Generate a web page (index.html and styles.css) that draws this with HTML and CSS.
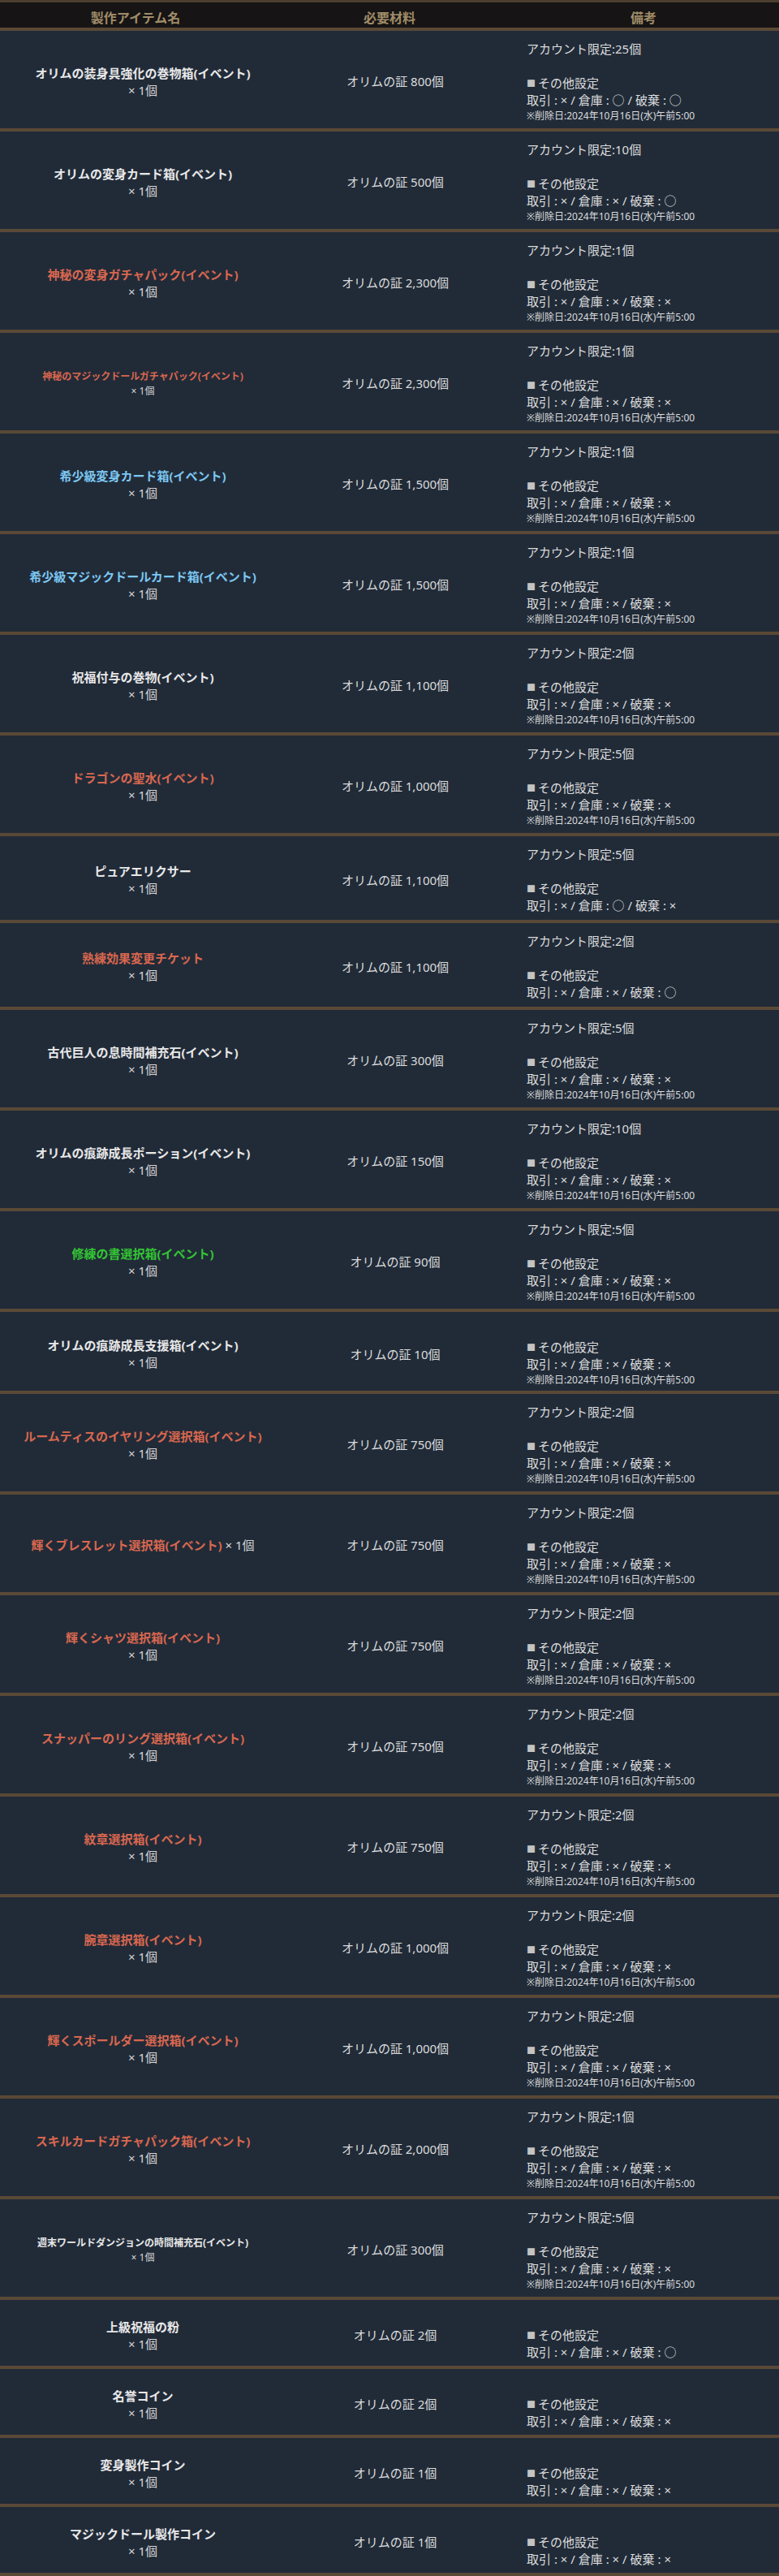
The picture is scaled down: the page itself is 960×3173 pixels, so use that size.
FILE: index.html
```html
<!DOCTYPE html>
<html lang="ja">
<head>
<meta charset="utf-8">
<title>製作アイテム一覧</title>
<link rel="stylesheet" href="styles.css">
</head>
<body>
<div class="table">
  <div class="thead">
    <div class="th">製作アイテム名</div>
    <div class="th">必要材料</div>
    <div class="th">備考</div>
  </div>

  <div class="row">
    <div class="item"><div class="name">オリムの装身具強化の巻物箱(イベント)</div><div class="qty">× 1個</div></div>
    <div class="mat">オリムの証 800個</div>
    <div class="note"><div>アカウント限定:25個</div><div></div><div><span class="sq">■</span>その他設定</div><div>取引 : × / 倉庫 : ○ / 破棄 : ○</div><div class="del">※削除日:2024年10月16日(水)午前5:00</div></div>
  </div>

  <div class="row">
    <div class="item"><div class="name">オリムの変身カード箱(イベント)</div><div class="qty">× 1個</div></div>
    <div class="mat">オリムの証 500個</div>
    <div class="note"><div>アカウント限定:10個</div><div></div><div><span class="sq">■</span>その他設定</div><div>取引 : × / 倉庫 : × / 破棄 : ○</div><div class="del">※削除日:2024年10月16日(水)午前5:00</div></div>
  </div>

  <div class="row">
    <div class="item"><div class="name red">神秘の変身ガチャパック(イベント)</div><div class="qty">× 1個</div></div>
    <div class="mat">オリムの証 2,300個</div>
    <div class="note"><div>アカウント限定:1個</div><div></div><div><span class="sq">■</span>その他設定</div><div>取引 : × / 倉庫 : × / 破棄 : ×</div><div class="del">※削除日:2024年10月16日(水)午前5:00</div></div>
  </div>

  <div class="row">
    <div class="item small"><div class="name red">神秘のマジックドールガチャパック(イベント)</div><div class="qty">× 1個</div></div>
    <div class="mat">オリムの証 2,300個</div>
    <div class="note"><div>アカウント限定:1個</div><div></div><div><span class="sq">■</span>その他設定</div><div>取引 : × / 倉庫 : × / 破棄 : ×</div><div class="del">※削除日:2024年10月16日(水)午前5:00</div></div>
  </div>

  <div class="row">
    <div class="item"><div class="name blue">希少級変身カード箱(イベント)</div><div class="qty">× 1個</div></div>
    <div class="mat">オリムの証 1,500個</div>
    <div class="note"><div>アカウント限定:1個</div><div></div><div><span class="sq">■</span>その他設定</div><div>取引 : × / 倉庫 : × / 破棄 : ×</div><div class="del">※削除日:2024年10月16日(水)午前5:00</div></div>
  </div>

  <div class="row">
    <div class="item"><div class="name blue">希少級マジックドールカード箱(イベント)</div><div class="qty">× 1個</div></div>
    <div class="mat">オリムの証 1,500個</div>
    <div class="note"><div>アカウント限定:1個</div><div></div><div><span class="sq">■</span>その他設定</div><div>取引 : × / 倉庫 : × / 破棄 : ×</div><div class="del">※削除日:2024年10月16日(水)午前5:00</div></div>
  </div>

  <div class="row">
    <div class="item"><div class="name">祝福付与の巻物(イベント)</div><div class="qty">× 1個</div></div>
    <div class="mat">オリムの証 1,100個</div>
    <div class="note"><div>アカウント限定:2個</div><div></div><div><span class="sq">■</span>その他設定</div><div>取引 : × / 倉庫 : × / 破棄 : ×</div><div class="del">※削除日:2024年10月16日(水)午前5:00</div></div>
  </div>

  <div class="row">
    <div class="item"><div class="name red">ドラゴンの聖水(イベント)</div><div class="qty">× 1個</div></div>
    <div class="mat">オリムの証 1,000個</div>
    <div class="note"><div>アカウント限定:5個</div><div></div><div><span class="sq">■</span>その他設定</div><div>取引 : × / 倉庫 : × / 破棄 : ×</div><div class="del">※削除日:2024年10月16日(水)午前5:00</div></div>
  </div>

  <div class="row">
    <div class="item"><div class="name">ピュアエリクサー</div><div class="qty">× 1個</div></div>
    <div class="mat">オリムの証 1,100個</div>
    <div class="note"><div>アカウント限定:5個</div><div></div><div><span class="sq">■</span>その他設定</div><div>取引 : × / 倉庫 : ○ / 破棄 : ×</div></div>
  </div>

  <div class="row">
    <div class="item"><div class="name red">熟練効果変更チケット</div><div class="qty">× 1個</div></div>
    <div class="mat">オリムの証 1,100個</div>
    <div class="note"><div>アカウント限定:2個</div><div></div><div><span class="sq">■</span>その他設定</div><div>取引 : × / 倉庫 : × / 破棄 : ○</div></div>
  </div>

  <div class="row">
    <div class="item"><div class="name">古代巨人の息時間補充石(イベント)</div><div class="qty">× 1個</div></div>
    <div class="mat">オリムの証 300個</div>
    <div class="note"><div>アカウント限定:5個</div><div></div><div><span class="sq">■</span>その他設定</div><div>取引 : × / 倉庫 : × / 破棄 : ×</div><div class="del">※削除日:2024年10月16日(水)午前5:00</div></div>
  </div>

  <div class="row">
    <div class="item"><div class="name">オリムの痕跡成長ポーション(イベント)</div><div class="qty">× 1個</div></div>
    <div class="mat">オリムの証 150個</div>
    <div class="note"><div>アカウント限定:10個</div><div></div><div><span class="sq">■</span>その他設定</div><div>取引 : × / 倉庫 : × / 破棄 : ×</div><div class="del">※削除日:2024年10月16日(水)午前5:00</div></div>
  </div>

  <div class="row">
    <div class="item"><div class="name green">修練の書選択箱(イベント)</div><div class="qty">× 1個</div></div>
    <div class="mat">オリムの証 90個</div>
    <div class="note"><div>アカウント限定:5個</div><div></div><div><span class="sq">■</span>その他設定</div><div>取引 : × / 倉庫 : × / 破棄 : ×</div><div class="del">※削除日:2024年10月16日(水)午前5:00</div></div>
  </div>

  <div class="row mid">
    <div class="item"><div class="name">オリムの痕跡成長支援箱(イベント)</div><div class="qty">× 1個</div></div>
    <div class="mat">オリムの証 10個</div>
    <div class="note"><div></div><div><span class="sq">■</span>その他設定</div><div>取引 : × / 倉庫 : × / 破棄 : ×</div><div class="del">※削除日:2024年10月16日(水)午前5:00</div></div>
  </div>

  <div class="row">
    <div class="item"><div class="name red">ルームティスのイヤリング選択箱(イベント)</div><div class="qty">× 1個</div></div>
    <div class="mat">オリムの証 750個</div>
    <div class="note"><div>アカウント限定:2個</div><div></div><div><span class="sq">■</span>その他設定</div><div>取引 : × / 倉庫 : × / 破棄 : ×</div><div class="del">※削除日:2024年10月16日(水)午前5:00</div></div>
  </div>

  <div class="row">
    <div class="item"><div><span class="name red">輝くブレスレット選択箱(イベント)</span> <span class="qty">× 1個</span></div></div>
    <div class="mat">オリムの証 750個</div>
    <div class="note"><div>アカウント限定:2個</div><div></div><div><span class="sq">■</span>その他設定</div><div>取引 : × / 倉庫 : × / 破棄 : ×</div><div class="del">※削除日:2024年10月16日(水)午前5:00</div></div>
  </div>

  <div class="row">
    <div class="item"><div class="name red">輝くシャツ選択箱(イベント)</div><div class="qty">× 1個</div></div>
    <div class="mat">オリムの証 750個</div>
    <div class="note"><div>アカウント限定:2個</div><div></div><div><span class="sq">■</span>その他設定</div><div>取引 : × / 倉庫 : × / 破棄 : ×</div><div class="del">※削除日:2024年10月16日(水)午前5:00</div></div>
  </div>

  <div class="row">
    <div class="item"><div class="name red">スナッパーのリング選択箱(イベント)</div><div class="qty">× 1個</div></div>
    <div class="mat">オリムの証 750個</div>
    <div class="note"><div>アカウント限定:2個</div><div></div><div><span class="sq">■</span>その他設定</div><div>取引 : × / 倉庫 : × / 破棄 : ×</div><div class="del">※削除日:2024年10月16日(水)午前5:00</div></div>
  </div>

  <div class="row">
    <div class="item"><div class="name red">紋章選択箱(イベント)</div><div class="qty">× 1個</div></div>
    <div class="mat">オリムの証 750個</div>
    <div class="note"><div>アカウント限定:2個</div><div></div><div><span class="sq">■</span>その他設定</div><div>取引 : × / 倉庫 : × / 破棄 : ×</div><div class="del">※削除日:2024年10月16日(水)午前5:00</div></div>
  </div>

  <div class="row">
    <div class="item"><div class="name red">腕章選択箱(イベント)</div><div class="qty">× 1個</div></div>
    <div class="mat">オリムの証 1,000個</div>
    <div class="note"><div>アカウント限定:2個</div><div></div><div><span class="sq">■</span>その他設定</div><div>取引 : × / 倉庫 : × / 破棄 : ×</div><div class="del">※削除日:2024年10月16日(水)午前5:00</div></div>
  </div>

  <div class="row">
    <div class="item"><div class="name red">輝くスポールダー選択箱(イベント)</div><div class="qty">× 1個</div></div>
    <div class="mat">オリムの証 1,000個</div>
    <div class="note"><div>アカウント限定:2個</div><div></div><div><span class="sq">■</span>その他設定</div><div>取引 : × / 倉庫 : × / 破棄 : ×</div><div class="del">※削除日:2024年10月16日(水)午前5:00</div></div>
  </div>

  <div class="row">
    <div class="item"><div class="name red">スキルカードガチャパック箱(イベント)</div><div class="qty">× 1個</div></div>
    <div class="mat">オリムの証 2,000個</div>
    <div class="note"><div>アカウント限定:1個</div><div></div><div><span class="sq">■</span>その他設定</div><div>取引 : × / 倉庫 : × / 破棄 : ×</div><div class="del">※削除日:2024年10月16日(水)午前5:00</div></div>
  </div>

  <div class="row">
    <div class="item small"><div class="name">週末ワールドダンジョンの時間補充石(イベント)</div><div class="qty">× 1個</div></div>
    <div class="mat">オリムの証 300個</div>
    <div class="note"><div>アカウント限定:5個</div><div></div><div><span class="sq">■</span>その他設定</div><div>取引 : × / 倉庫 : × / 破棄 : ×</div><div class="del">※削除日:2024年10月16日(水)午前5:00</div></div>
  </div>

  <div class="row short">
    <div class="item"><div class="name">上級祝福の粉</div><div class="qty">× 1個</div></div>
    <div class="mat">オリムの証 2個</div>
    <div class="note"><div></div><div><span class="sq">■</span>その他設定</div><div>取引 : × / 倉庫 : × / 破棄 : ○</div></div>
  </div>

  <div class="row short">
    <div class="item"><div class="name">名誉コイン</div><div class="qty">× 1個</div></div>
    <div class="mat">オリムの証 2個</div>
    <div class="note"><div></div><div><span class="sq">■</span>その他設定</div><div>取引 : × / 倉庫 : × / 破棄 : ×</div></div>
  </div>

  <div class="row short">
    <div class="item"><div class="name">変身製作コイン</div><div class="qty">× 1個</div></div>
    <div class="mat">オリムの証 1個</div>
    <div class="note"><div></div><div><span class="sq">■</span>その他設定</div><div>取引 : × / 倉庫 : × / 破棄 : ×</div></div>
  </div>

  <div class="row short">
    <div class="item"><div class="name">マジックドール製作コイン</div><div class="qty">× 1個</div></div>
    <div class="mat">オリムの証 1個</div>
    <div class="note"><div></div><div><span class="sq">■</span>その他設定</div><div>取引 : × / 倉庫 : × / 破棄 : ×</div></div>
  </div>
</div>
</body>
</html>
```

FILE: styles.css
```css
html, body {
  margin: 0;
  padding: 0;
  background: #212b38;
}

body {
  font-family: "Noto Sans", "Noto Sans CJK JP", sans-serif;
  color: #dcdcdc;
  font-size: 15px;
  line-height: 21px;
}

.table {
  width: 960px;
}

.thead {
  display: grid;
  grid-template-columns: 334px 292px 334px;
  background: #161414;
  border-top: 3px solid #4d3f30;
  border-bottom: 4px solid #5a4936;
  height: 31px;
  box-sizing: content-box;
}

.th {
  text-align: center;
  font-weight: bold;
  font-size: 16px;
  line-height: 22px;
  height: 22px;
  color: #a08c68;
  padding-top: 8px;
}

.row {
  display: grid;
  grid-template-columns: 334px 292px 334px;
  align-items: center;
  padding: 12px 0 7px;
  border-bottom: 4px solid #5a4936;
}

.row.mid {
  padding-bottom: 5px;
}

.row.short {
  padding-bottom: 6px;
}

.item {
  text-align: center;
  padding-left: 18px;
}

.item > div {
  height: 21px;
  white-space: nowrap;
}

.item.small {
  font-size: 12px;
  line-height: 18px;
}

.item.small > div {
  height: 18px;
}

.name {
  font-weight: bold;
  color: #e8e8e8;
}

.name.red { color: #d9674f; }
.name.blue { color: #7cc7f2; }
.name.green { color: #33c433; }

.qty {
  color: #d6d6d6;
}

.mat {
  text-align: center;
  padding-left: 14px;
  height: 21px;
}

.note {
  padding-left: 23px;
}

.note > div {
  height: 21px;
  white-space: nowrap;
}

.sq {
  font-size: 11px;
  line-height: 1;
  color: #c4c4c4;
  margin-right: 3px;
  vertical-align: 1px;
}

.note > .del {
  font-size: 12px;
  line-height: 17px;
  height: 17px;
}
```
